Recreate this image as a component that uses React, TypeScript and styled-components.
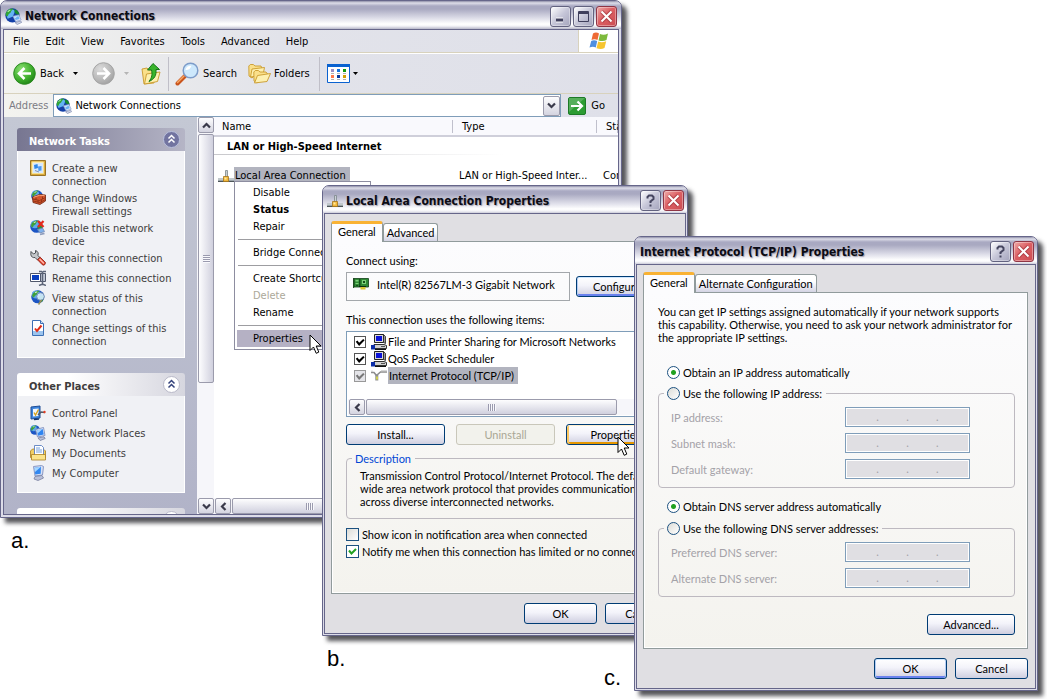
import React, { useId } from "react";
import styled, { createGlobalStyle, css } from "styled-components";

/* ---------- palette and shared values ---------- */

const c = {
  frame: "#66668a",
  face: "#e0dfe3",
  line: "#919b9c",
  field: "#7f9db9",
  navy: "#003c74",
  beige: "#d8d2bd",
  task: "#3f3d3d",
  select: "#b2b4bf",
};

const shellFont = `"DejaVu Sans Condensed", "DejaVu Sans", sans-serif`;
const dialogFont = `Lato, "Liberation Sans", sans-serif`;

const GlobalStyle = createGlobalStyle`
  * { box-sizing: border-box; }
  body { margin: 0; background: #fff; color: #000; }
  button, input { font: inherit; color: inherit; margin: 0; padding: 0; }
  figure { margin: 0; }
  svg { display: block; flex: none; }
`;

/* ---------- desktop ---------- */

const Desktop = styled.main`
  display: grid;
  grid-template-columns: 322fr 282fr 18fr 12fr 54fr 350fr 9fr;
  overflow: hidden;
  padding-bottom: 8px;
`;

const Panel = styled.figure<{ $from: number; $to: number; $top: number }>`
  grid-row: 1;
  grid-column: ${(p) => p.$from} / ${(p) => p.$to};
  align-self: start;
  margin-top: ${(p) => p.$top}px;
  min-width: 0;
  position: relative;
`;

const SidePanel = styled(Panel)`
  display: grid;
  grid-template-columns: 30px minmax(0, 1fr);
  align-items: end;
`;

const Caption = styled.figcaption<{ $indent?: number }>`
  font: 22px/26px "Liberation Sans", Arial, sans-serif;
  padding: 10px 0 0 ${(p) => p.$indent ?? 0}px;
`;

/* ---------- window frame ---------- */

const Frame = styled.section<{ $edge: number }>`
  border: 1px solid ${c.frame};
  border-radius: 7px 7px 0 0;
  background: #dcdce8;
  padding: 0 ${(p) => p.$edge}px ${(p) => p.$edge}px;
  box-shadow: 5px 5px 4px rgba(30, 30, 35, 0.75);
`;

const TitleBar = styled.header<{ $edge: number }>`
  display: flex;
  align-items: center;
  gap: 2px;
  height: ${(p) => 26 + p.$edge}px;
  margin: 0 -${(p) => p.$edge}px;
  padding: 2px ${(p) => 2 + p.$edge}px 0 4px;
  border-radius: 6px 6px 0 0;
  background: linear-gradient(#8e8ea8 0, #dedee9 2px, #a9a9c2 5px, #a9a9c1 8px, #e2e2ec 18px, #fff 23px, #f4f4f8 25px, #b6b6c8 28px);
`;

const Title = styled.h1`
  flex: 1;
  min-width: 0;
  margin: 0;
  padding-left: 1px;
  overflow: hidden;
  white-space: nowrap;
  font: bold 12px/20px ${shellFont};
  color: #0b0b14;
  text-shadow: 1px 1px 1px rgba(110, 110, 130, 0.6);
`;

const CaptionButton = styled.button<{ $close?: boolean }>`
  width: 21px;
  height: 21px;
  display: grid;
  place-items: center;
  border: 1px solid ${(p) => (p.$close ? "#8f3545" : "#62627f")};
  border-radius: 3px;
  box-shadow: inset 0 0 0 1px rgba(255, 255, 255, 0.35);
  background: ${(p) =>
    p.$close
      ? "linear-gradient(135deg, #efaaa8, #dc6064 45%, #cc4c52)"
      : "linear-gradient(135deg, #fff, #c6c6d8 50%, #a4a4bc)"};
`;

const Client = styled.div<{ $face?: boolean }>`
  border: 1px solid ${c.frame};
  ${(p) => p.$face && css`
    background: ${c.face};
    padding: 7px 7px 9px 6px;
  `}
`;

const CloseMark = () => (
  <svg width="13" height="13" viewBox="0 0 13 13">
    <path d="M1.500 1.500l10 10M11.500 1.500l-10 10" stroke="#8b2530" strokeOpacity=".5" strokeWidth="4" />
    <path d="M1.500 1.500l10 10M11.500 1.500l-10 10" stroke="#fff" strokeWidth="2" />
  </svg>
);

const HelpMark = () => (
  <svg width="13" height="13" viewBox="0 0 13 13" fill="none">
    <path d="M3.500 4.500V3L5 1.500h3L9.500 3v2L6.500 7.500V9" stroke="#45455f" strokeWidth="2" />
    <path d="M5.500 10.500h2v2h-2z" fill="#45455f" />
  </svg>
);

/* ---------- icons ---------- */

const Globe = ({ x = 0, y = 0, r = 6 }: { x?: number; y?: number; r?: number }) => (
  <g transform={`translate(${x} ${y}) scale(${r / 6})`}>
    <circle cx="6" cy="6" r="5.800" fill="#1c55c4" />
    <circle cx="4.500" cy="4" r="3.600" fill="#5fa8ee" />
    <path d="M1 4.500C2 1.500 5 .3 7.500.6 7 2 5.500 2 5.500 3.500 4.500 5 3 4.500 3 6.500 2 7 1 6 1 4.500z" fill="#3fa03a" />
    <path d="M7 5.500c2-1.500 3.500-1 4.600 0 0 2.500-1.200 4.500-3 5.500C8 9.500 6.500 8 7 5.500z" fill="#2c9234" />
    <path d="M3.500 2.500l2-1" stroke="#cdebc8" />
  </g>
);

const NetworkIcon = ({ size = 16 }: { size?: number }) => (
  <svg width={size} height={size} viewBox="0 0 16 16">
    <circle cx="7" cy="7" r="6.700" fill="#1440a8" />
    <path d="M2.500 10C.5 6 2 2 6.500 1l3 1.500L7.500 8z" fill="#62b4f4" />
    <path d="M.6 5.500C1.500 2 4.500.3 8 .5 7.500 2 5.500 2.200 5.500 4 4 5.800 3.200 5.300 2.700 7.500 1.500 8.500.5 7.500.6 5.500z" fill="#2fa536" />
    <path d="M9 1.200c2.500.6 4.200 2.600 4.600 5L11 6.200C9.200 5 8.300 3 9 1.200z" fill="#178a30" />
    <path d="M2.500 3.500L5 1.800" stroke="#b6efac" />
    <path d="M7.500 7.800l5.500-1.300 2.200 4.700-5.200 1.600z" fill="#dfeafc" stroke="#8ba0cf" strokeWidth=".7" />
    <path d="M8.500 8.300l4-.9 1.300 2.900-3.700 1.100z" fill="#6fb2f5" />
    <path d="M8.500 8.300l4-.9-3.200 2.400z" fill="#c4e7ff" />
    <path d="M9.500 13.800l5.200-1.500 1.100 1.200-4.300 2z" fill="#d3d9ea" stroke="#7f8aae" strokeWidth=".7" />
  </svg>
);

const ConnectionIcon = () => (
  <svg width="16" height="16" viewBox="0 0 16 16">
    <path d="M7.500 2.500h2v7h-2z" fill="#c9d0d4" stroke="#7b858a" strokeWidth=".8" />
    <path d="M0 10h16v3.500H0z" fill="#9da6ab" />
    <path d="M0 11h16" stroke="#e6ebee" />
    <path d="M0 13.500h16" stroke="#4d5659" />
    <path d="M5.500 8.500h5v5h-5z" fill="#f3b93c" stroke="#a7761a" strokeWidth=".8" />
    <path d="M6.500 9.500h2v2h-2z" fill="#ffeaa0" />
  </svg>
);

const WizardIcon = () => (
  <svg width="16" height="16" viewBox="0 0 16 16">
    <path d="M.5.5h15v15H.5z" fill="#d9a93a" stroke="#9a7426" />
    <path d="M2 2h11.500v11.500H2z" fill="#fff6d0" stroke="#f6dd8e" />
    <path d="M3 3h10v10H3z" fill="#d8e8fb" />
    <path d="M4 5l3.500-1 .5 4-3.500 1z" fill="#2f86e8" />
    <path d="M8 6.500l3.500-.5v4.500l-3 .5z" fill="#4b98f0" />
    <path d="M5 10.500l4 1.500" stroke="#8593b4" />
  </svg>
);

const FirewallIcon = () => (
  <svg width="16" height="16" viewBox="0 0 16 16">
    <Globe x={1} y={0} r={6} />
    <path d="M2.500 7l7-2.500 6 .5v6l-5.500 3.500-7-2z" fill="#d1552c" stroke="#6f2410" strokeWidth=".8" />
    <path d="M2.500 9l7 1.500 6-3M3 11l7 1.500 5.500-3M6 7.500v2.300M8 10.500v2M12.500 6.500v2.500M11.500 10v2.500" stroke="#8c2c10" strokeWidth=".8" fill="none" />
    <path d="M3.500 7.300l6-2 5 .3" stroke="#f7a078" fill="none" />
  </svg>
);

const DisableIcon = () => (
  <svg width="16" height="16" viewBox="0 0 16 16">
    <Globe r={6.500} />
    <path d="M8 1l5.500 6M13.500 1L8 7" stroke="#e52a1d" strokeWidth="2.200" />
    <path d="M7.500 9.500l5-1.500 2 3.500-4.500 1.500z" fill="#7fb2ee" stroke="#7088b4" strokeWidth=".8" />
    <path d="M10 14.500l4.500-1.200" stroke="#8f9dbd" strokeWidth="1.800" />
  </svg>
);

const WrenchIcon = () => (
  <svg width="16" height="16" viewBox="0 0 16 16">
    <path d="M.8 4.500L1 1.500l2.500 2.500L5.500 3V.5C8 1.200 8.800 3.500 7.800 5.500l2.200 2-2.500 2.500L5 7.500C3 8 1.200 7 .8 4.500z" fill="#c3c7ca" stroke="#3f4548" strokeWidth=".9" />
    <path d="M7.500 9.800l2.700-2.600 5 5c.8 1.800-1.200 3.800-2.800 2.600z" fill="#e3412d" stroke="#85190e" strokeWidth=".8" />
    <path d="M9.500 9l4.500 4.500" stroke="#ffc1b3" strokeWidth="1.200" />
  </svg>
);

const RenameIcon = () => (
  <svg width="16" height="16" viewBox="0 0 16 16">
    <path d="M.5 3.500h10v8H.5z" fill="#fff" stroke="#50576b" />
    <path d="M2 5h7v5H2z" fill="#0a3fc0" />
    <path d="M10.500 3.500h5v8h-5z" fill="#c2c8d6" stroke="#50576b" />
    <path d="M9 1.500h2.500l1 1 1-1H16M12.500 2v12M9 15.500l2.500-1h2l2.500 1" stroke="#5c6478" strokeWidth="1.500" fill="none" />
  </svg>
);

const StatusIcon = () => (
  <svg width="16" height="16" viewBox="0 0 16 16">
    <Globe x={1} r={6.800} />
    <circle cx="10.500" cy="6.500" r="3.800" fill="#d4edff" fillOpacity=".92" stroke="#7690b4" />
    <path d="M11.500 10l-3 4.500" stroke="#9a8f5a" strokeWidth="1.500" />
  </svg>
);

const SettingsIcon = () => (
  <svg width="16" height="16" viewBox="0 0 16 16">
    <path d="M2.500.5h8l3 3v12h-11z" fill="#fff" stroke="#3c6fb4" />
    <path d="M3 11h10v4H3z" fill="#9cc4ee" />
    <path d="M10.500.5v3h3" fill="#cfe0f5" stroke="#3c6fb4" />
    <path d="M5 8.500l2 2.500 4.500-5.500" stroke="#e02b14" strokeWidth="2" fill="none" />
  </svg>
);

const ControlPanelIcon = () => (
  <svg width="16" height="16" viewBox="0 0 16 16">
    <path d="M1 2l9-1v12l-9 1z" fill="#3c84dc" stroke="#1f4d96" />
    <path d="M3 4l5.500-.5v7.500L3 11.500z" fill="#eff6ff" />
    <path d="M4 7.500L5.500 10l3-5.500" stroke="#d8a21c" strokeWidth="1.400" fill="none" />
    <path d="M8 10l3-3 4 .5" stroke="#505a66" strokeWidth="1.500" fill="none" />
    <circle cx="14.500" cy="7" r="1.200" fill="#e33b22" />
    <path d="M4 14.500l5-.5" stroke="#16366e" strokeWidth="1.500" />
  </svg>
);

const PlacesIcon = () => (
  <svg width="16" height="16" viewBox="0 0 16 16">
    <Globe r={5} />
    <path d="M5.500 4.500l8-2 1.500 8-7.500 1.500z" fill="#dbe6fb" stroke="#7f8fbd" strokeWidth=".9" />
    <path d="M6.700 5.400l6-1.500 1 5.600-5.600 1.200z" fill="#2f84f0" />
    <path d="M6.700 5.400l6-1.500-5.200 4.500z" fill="#a6d6ff" />
    <path d="M8 13l6-1.200 1.200 1.700-5 2z" fill="#b9c0d9" stroke="#7980a0" strokeWidth=".8" />
  </svg>
);

const DocumentsIcon = () => (
  <svg width="16" height="16" viewBox="0 0 16 16">
    <path d="M.5 6l2-2h2v10H2L.5 12.500z" fill="#f1cf63" stroke="#a97f1f" strokeWidth=".8" />
    <path d="M15.500 6l-1.500-1.500h-2V13h3.500z" fill="#f1cf63" stroke="#a97f1f" strokeWidth=".8" />
    <path d="M4.500.5h7l2 2V12h-9z" fill="#fff" stroke="#5b7fc0" strokeWidth=".9" />
    <path d="M6 3h4M6 5h6M6 7h6" stroke="#74a0dc" />
    <path d="M1.500 9.500h14v5.500H1.500z" fill="#fbe48b" stroke="#a97f1f" strokeWidth=".8" />
  </svg>
);

const ComputerIcon = () => (
  <svg width="16" height="16" viewBox="0 0 16 16">
    <path d="M3.500 1.500l8-1 2 1-1 8.500-7.500 1z" fill="#d6e0f6" stroke="#7f8fbd" strokeWidth=".9" />
    <path d="M4.500 2.700l6.500-.9-.3 7-5.500.7z" fill="#3388f0" />
    <path d="M4.500 2.700l6.500-.9-6 5.200z" fill="#a6d6ff" />
    <path d="M5 11.500l7-1 1.500 2.500-5.500 2.500-4-1.500z" fill="#b9c0d9" stroke="#7980a0" strokeWidth=".8" />
  </svg>
);

const BackIcon = ({ off }: { off?: boolean }) => (
  <svg width="23" height="23" viewBox="0 0 23 23">
    <defs>
      <radialGradient id={off ? "fwd" : "bck"} cx=".35" cy=".3" r=".8">
        <stop offset="0" stopColor={off ? "#dcdcdc" : "#8be072"} />
        <stop offset=".6" stopColor={off ? "#b9b9b9" : "#3fae2c"} />
        <stop offset="1" stopColor={off ? "#9d9d9d" : "#1b7d13"} />
      </radialGradient>
    </defs>
    <circle cx="11.500" cy="11.500" r="10.800" fill={`url(#${off ? "fwd" : "bck"})`} stroke={off ? "#a5a5a5" : "#2b8a20"} />
    <path
      d={off ? "M5 11.500h12M11.500 6l5.500 5.500-5.500 5.500" : "M18 11.500H6M11.500 6L6 11.500l5.500 5.500"}
      stroke="#fff"
      strokeWidth="2.600"
      fill="none"
    />
  </svg>
);

const Caret = ({ color = "#000" }: { color?: string }) => (
  <svg width="5" height="3" viewBox="0 0 5 3">
    <path d="M0 0h5L2.500 3z" fill={color} />
  </svg>
);

const folderFill = { fill: "#fae08a", stroke: "#c99a2c", strokeWidth: 0.9 };

const UpIcon = () => (
  <svg width="20" height="22" viewBox="0 0 20 22">
    <path d="M1 6l5-1 2 2 5-1v14l-10 1z" {...folderFill} />
    <path d="M3.500 21L5.500 11l13.500-2-2.500 9.500z" fill="#fdf0b0" stroke="#c99a2c" strokeWidth=".9" />
    <path d="M12 .5l6.500 6h-3.500c.5 6-1.500 9.500-7 12 3-4 3.500-7 2.500-11.500H6.500z" fill="#39b42c" stroke="#16761a" />
  </svg>
);

const SearchIcon = () => (
  <svg width="24" height="24" viewBox="0 0 24 24">
    <path d="M2.500 21.500L10 14" stroke="#c9541c" strokeWidth="4" strokeLinecap="round" />
    <path d="M2.500 20.500L9 14" stroke="#f6a765" strokeWidth="1.500" strokeLinecap="round" />
    <circle cx="15.500" cy="8.500" r="7.300" fill="#cde8fc" stroke="#7d9cc9" strokeWidth="1.500" />
    <path d="M10.500 8c.5-3 3-4.500 6-4.200-1 3-3 4.500-6 4.200z" fill="#fff" />
  </svg>
);

const FoldersIcon = () => (
  <svg width="23" height="21" viewBox="0 0 23 21">
    <path d="M1 13L.8 3l1.500-1.500h3L7 3h6l1 2.500L4 15z" {...folderFill} />
    <path d="M2.500 14L4 6l12.500-1.500L15 12z" fill="#fdf0b0" stroke="#c99a2c" strokeWidth=".9" />
    <path d="M6 18L5.800 9l1.500-1.500h3L12 9h6l1.500 2L9 20z" {...folderFill} />
    <path d="M6.500 20L9.500 12.500l13-2L19 18.500z" fill="#fdf0b0" stroke="#c99a2c" strokeWidth=".9" />
  </svg>
);

const ViewsIcon = () => (
  <svg width="23" height="19" viewBox="0 0 23 19">
    <path d="M.5.5h22v18H.5z" fill="#fff" stroke="#0a62d0" />
    <path d="M0 0h23v3H0z" fill="#0a62d0" />
    <path d="M4 5h3v3H4z" fill="#9a8fc4" />
    <path d="M10 5h3v3h-3z" fill="#1273e0" />
    <path d="M16 5h3v3h-3z" fill="#109a10" />
    <path d="M4 11h3v3H4z" fill="#ff7a4a" />
    <path d="M10 11h3v3h-3z" fill="#0a3a9c" />
    <path d="M16 11h3v3h-3z" fill="#d2a005" />
    <path d="M4 9.500h3M10 9.500h3M16 9.500h3M4 15.500h3M10 15.500h3M16 15.500h3" stroke="#b0b0b0" />
  </svg>
);

const FlagIcon = () => (
  <svg width="20" height="18" viewBox="0 0 20 18">
    <path d="M4 1.500C6 .3 8 .3 10 1.500L8.500 8c-2-1-4-1-6 0z" fill="#ee6a35" />
    <path d="M11 2c2.500 1 5 1 8-.5L17.500 8c-2.500 1.500-5 1.300-8 .5z" fill="#7dba3c" />
    <path d="M2.200 9C4 8 6 8 8.200 9L6.800 15.500c-2-1-4-1-6.300 0z" fill="#4f8fe0" />
    <path d="M9.200 9.500c2.500 1 5 1 8-.3L15.500 16c-2.500 1.300-5 1.200-8 .2z" fill="#f7c52f" />
  </svg>
);

const GoIcon = () => (
  <svg width="18" height="18" viewBox="0 0 18 18">
    <rect x=".5" y=".5" width="17" height="17" rx="1.500" fill="#2c9c32" stroke="#1d7a26" />
    <path d="M1 1h16L1 15z" fill="#fff" fillOpacity=".2" />
    <path d="M3 9h11M9.500 4.500L14 9l-4.500 4.500" stroke="#fff" strokeWidth="2.200" fill="none" />
  </svg>
);

const Chevron = ({ turn = 0 }: { turn?: number }) => (
  <svg width="9" height="9" viewBox="0 0 9 9">
    <path d="M1 2.500L4.500 6 8 2.500" transform={`rotate(${turn} 4.500 4.500)`} stroke="#3a3a4a" strokeWidth="2.200" fill="none" />
  </svg>
);

const CollapseMark = ({ color }: { color: string }) => (
  <svg width="9" height="10" viewBox="0 0 9 10">
    <path d="M1.500 4.500l3-3 3 3M1.500 8.500l3-3 3 3" stroke={color} strokeWidth="1.500" fill="none" />
  </svg>
);

const CardIcon = () => (
  <svg width="16" height="12" viewBox="0 0 16 12">
    <path d="M1 .5h14.500v8.500H1z" fill="#2f8a35" stroke="#123f16" strokeWidth=".8" />
    <path d="M.6 0v10" stroke="#123f16" />
    <path d="M2.500 2h3v1.500h-3zM2.500 5h3v1h-3zM9 2h4v4H9z" fill="#7fd07a" />
    <path d="M6 1h1.500v7H6zM10 3h2v2h-2zM3 7h2v1H3z" fill="#14501a" />
    <path d="M7.500 9h5v2.500h-5z" fill="#d9c532" />
    <path d="M6 8.500h7" stroke="#0c2e10" />
  </svg>
);

const ServiceIcon = () => (
  <svg width="16" height="16" viewBox="0 0 16 16">
    <path d="M3.500.5h9v8h-9z" fill="#d8d8d8" stroke="#222" />
    <path d="M5 2h6v5H5z" fill="#0b12d8" />
    <path d="M12.500.5l2 2v7l-2-1z" fill="#9a9a9a" stroke="#222" strokeWidth=".8" />
    <path d="M3 10.500h10l2.500 1v3H3z" fill="#cfcfcf" stroke="#333" />
    <path d="M10 12.500h4" stroke="#555" />
    <path d="M0 11h4v4.500H0z" fill="#0b2ca8" />
    <path d="M4 15.500h11" stroke="#111" />
  </svg>
);

const ProtocolIcon = () => (
  <svg width="16" height="16" viewBox="0 0 16 16">
    <path d="M0 4.500h3l2.500 3M16 4H9.500L6 7" stroke="#8d8d8d" strokeWidth="1.600" fill="none" />
    <path d="M0 3.200h2M10 2.700h6" stroke="#cdcdcd" />
    <path d="M4.300 6.500h3v6h-3z" fill="#8e8e8e" />
    <path d="M5 8.500h2v3H5z" fill="#cfcf4e" />
  </svg>
);

const Pointer = styled.svg.attrs({ width: 13, height: 21, viewBox: "0 0 13 21", children: (
  <path d="M1 1v15.500l3.500-3.500 2.700 6.300 2.600-1.200L7.200 12H12z" fill="#fff" stroke="#000" />
) })<{ $left: number; $top: number }>`
  position: absolute;
  left: ${(p) => p.$left}px;
  top: ${(p) => p.$top}px;
`;

/* ---------- explorer window ---------- */

const Shell = styled.div`
  font: 11px/13px ${shellFont};
  white-space: nowrap;
`;

const barFill = css`
  background: linear-gradient(90deg, #f3f3ef, #e2e3ea 45%, #dfe0e9);
`;

const MenuBar = styled.nav`
  ${barFill}
  display: flex;
  height: 23px;
  border-bottom: 1px solid ${c.beige};
  padding-left: 1px;
`;

const MenuButton = styled.button`
  border: 0;
  background: none;
  padding: 0 8px;
`;

const FlagBox = styled.div`
  margin-left: auto;
  width: 40px;
  display: grid;
  place-items: center;
  background: #fff;
  border-left: 1px solid ${c.beige};
`;

const ToolBar = styled.div`
  ${barFill}
  display: flex;
  align-items: center;
  height: 41px;
  border-top: 1px solid #fff;
  border-bottom: 1px solid ${c.beige};
  padding-left: 9px;
`;

const ToolButton = styled.button<{ $gap?: number; $after: number }>`
  display: flex;
  align-items: center;
  gap: ${(p) => p.$gap ?? 4}px;
  border: 0;
  background: none;
  margin-right: ${(p) => p.$after}px;
`;

const ToolDivider = styled.i<{ $after: number }>`
  width: 1px;
  height: 34px;
  background: #c0bfc8;
  margin-right: ${(p) => p.$after}px;
`;

const AddressBar = styled.form`
  ${barFill}
  display: flex;
  align-items: center;
  height: 23px;
  color: #7c7c84;
  padding-left: 5px;
`;

const AddressBox = styled.div`
  flex: 1;
  display: flex;
  align-items: center;
  gap: 3px;
  height: 23px;
  margin: 0 7px 0 5px;
  padding: 0 0 0 2px;
  border: 1px solid ${c.field};
  background: #fff;
  color: #000;
`;

const AddressInput = styled.input`
  flex: 1;
  min-width: 0;
  border: 0;
  outline: 0;
  background: none;
`;

const GoButton = styled.button`
  display: flex;
  align-items: center;
  gap: 5px;
  border: 0;
  background: none;
  color: #000;
  margin-right: 13px;
`;

const BarButton = styled.button<{ $drop?: boolean }>`
  flex: none;
  width: ${(p) => (p.$drop ? 17 : 16)}px;
  height: ${(p) => (p.$drop ? 20 : 16)}px;
  display: grid;
  place-items: center;
  border: 1px solid #9b9bac;
  border-radius: 2px;
  background: linear-gradient(#fdfdfe, #d4d4e0);
`;

const Explorer = styled.div`
  display: grid;
  grid-template-columns: 193px 17px minmax(0, 1fr);
  height: 397px;
  background: #fff;
`;

const TaskPane = styled.aside`
  display: flex;
  flex-direction: column;
  gap: 15px;
  overflow: hidden;
  white-space: normal;
  padding: 11px 12px 0 13px;
  background: linear-gradient(#c4c8d4, #b1b3c8);
`;

const TaskGroup = styled.section`
  flex: none;
`;

const TaskHead = styled.h2<{ $strong?: boolean }>`
  display: flex;
  align-items: center;
  justify-content: space-between;
  height: 23px;
  margin: 0;
  padding: 3px 5px 0 12px;
  border-radius: 3px 3px 0 0;
  font: bold 11px/13px ${shellFont};
  color: ${(p) => (p.$strong ? "#fff" : c.task)};
  background: ${(p) =>
    p.$strong ? "linear-gradient(90deg, #777691, #b5b5c6)" : "linear-gradient(90deg, #fff 30%, #d6d6df)"};
`;

const Collapse = styled.button<{ $strong?: boolean }>`
  width: 17px;
  height: 17px;
  margin-top: -4px;
  display: grid;
  place-items: center;
  border: 1px solid ${(p) => (p.$strong ? "#b9c0dc" : "#b8b8c8")};
  border-radius: 50%;
  background: ${(p) => (p.$strong ? "#7274a0" : "#fff")};
`;

const TaskList = styled.ul`
  display: grid;
  gap: 4px;
  margin: 0;
  padding: 9px 11px 11px 12px;
  list-style: none;
  border: 1px solid #fff;
  border-top: 0;
  background: #f0f1f5;
`;

const TaskLink = styled.a`
  display: flex;
  gap: 6px;
  min-height: 16px;
  color: ${c.task};
  text-decoration: none;
  span { padding-top: 2px; margin-bottom: -2px; }
`;

const VScroll = styled.div`
  display: flex;
  flex-direction: column;
  align-items: flex-end;
  background: #f6f6fa;
`;

const Thumb = styled.div<{ $length?: number; $column?: boolean }>`
  display: grid;
  place-items: center;
  border: 1px solid #9b9bac;
  border-radius: 2px;
  ${(p) =>
    p.$column
      ? css`width: 16px; height: ${p.$length}px; margin: 1px 0 auto; background: linear-gradient(90deg, #fdfdfe, #d0d0de);`
      : css`height: 16px; margin: 0 1px; width: ${p.$length}px; flex: 0 1 auto; background: linear-gradient(#fdfdfe, #d0d0de);`}
`;

const Grip = styled.i<{ $column?: boolean }>`
  width: ${(p) => (p.$column ? 7 : 8)}px;
  height: ${(p) => (p.$column ? 8 : 7)}px;
  background: repeating-linear-gradient(${(p) => (p.$column ? "180deg" : "90deg")}, #9a9aae 0 1px, #f8f8fc 1px 2px);
`;

const HScroll = styled.div`
  display: flex;
  padding-left: 1px;
  background: #f6f6fa;
`;

const ListPane = styled.div`
  position: relative;
  display: flex;
  flex-direction: column;
  justify-content: space-between;
  overflow: hidden;
`;

const Connections = styled.table`
  width: 100%;
  table-layout: fixed;
  border-collapse: separate;
  border-spacing: 0;
  th, td { text-align: left; vertical-align: top; font-weight: normal; padding: 0; overflow: hidden; }
  thead th {
    height: 20px;
    padding: 3px 0 0 9px;
    background: linear-gradient(90deg, #c0c0cc, #c0c0cc) right 3px / 1px 13px no-repeat #f9f9fd;
    border-bottom: 2px solid #cfcfda;
  }
  thead th:first-child { padding-left: 8px; }
`;

const GroupCell = styled.th`
  && {
    height: 18px;
    padding: 3px 0 0 13px;
    font-weight: bold;
    background: linear-gradient(90deg, #c8c8cc, #fff 290px) 0 100% / 100% 1px no-repeat;
  }
`;

const NameCell = styled.td`
  && { padding: 12px 0 0 4px; }
`;

const FlatCell = styled.td`
  && { padding: 14px 0 0 6px; }
`;

const Named = styled.div`
  display: flex;
  align-items: center;
`;

const Selected = styled.span<{ $pad: number }>`
  padding: 1px ${(p) => p.$pad}px 1px 1px;
  line-height: 15px;
  background: ${c.select};
`;

const ContextMenu = styled.ul`
  position: absolute;
  left: 20px;
  top: 64px;
  width: 137px;
  margin: 0;
  padding: 2px;
  list-style: none;
  border: 1px solid #8d8da0;
  background: #fff;
`;

const MenuItem = styled.button<{ $bold?: boolean; $lit?: boolean }>`
  display: block;
  width: 100%;
  height: 17px;
  padding-left: 16px;
  text-align: left;
  border: 0;
  background: ${(p) => (p.$lit ? "#b5b1c4" : "none")};
  font-weight: ${(p) => (p.$bold ? "bold" : "normal")};
  &:disabled { color: #aca899; }
`;

const MenuRule = styled.li`
  height: 1px;
  margin: 4px 1px;
  background: #9d9da1;
`;

const menus = ["File", "Edit", "View", "Favorites", "Tools", "Advanced", "Help"];

const tasks: [React.FC, string][] = [
  [WizardIcon, "Create a new connection"],
  [FirewallIcon, "Change Windows Firewall settings"],
  [DisableIcon, "Disable this network device"],
  [WrenchIcon, "Repair this connection"],
  [RenameIcon, "Rename this connection"],
  [StatusIcon, "View status of this connection"],
  [SettingsIcon, "Change settings of this connection"],
];

const places: [React.FC, string][] = [
  [ControlPanelIcon, "Control Panel"],
  [PlacesIcon, "My Network Places"],
  [DocumentsIcon, "My Documents"],
  [ComputerIcon, "My Computer"],
];

const contextItems = ["Disable", "Status", "Repair", "-", "Bridge Connections", "-", "Create Shortcut", "Delete", "Rename", "-", "Properties"];

const TaskSection = ({ title, strong, items }: { title?: string; strong?: boolean; items: [React.FC, string][] }) => (
  <TaskGroup>
    <TaskHead $strong={strong}>
      <span>{title}</span>
      <Collapse $strong={strong} aria-label="Collapse section">
        <CollapseMark color={strong ? "#fff" : "#34427c"} />
      </Collapse>
    </TaskHead>
    <TaskList>
      {items.map(([Icon, text]) => (
        <li key={text}>
          <TaskLink href="#"><Icon /><span>{text}</span></TaskLink>
        </li>
      ))}
    </TaskList>
  </TaskGroup>
);

const ExplorerWindow = () => (
  <Frame $edge={2}>
    <TitleBar $edge={2}>
      <NetworkIcon size={17} />
      <Title>Network Connections</Title>
      <CaptionButton aria-label="Minimize">
        <svg width="13" height="13"><path d="M2 10h7" stroke="#fff" strokeWidth="5" /><path d="M2 10h7" stroke="#3f3f5c" strokeWidth="3" /></svg>
      </CaptionButton>
      <CaptionButton aria-label="Maximize">
        <svg width="13" height="13" fill="none"><path d="M1.500 1.500h10v10h-10zM1 2.500h11M1 3.500h11" stroke="#3f3f5c" /></svg>
      </CaptionButton>
      <CaptionButton $close aria-label="Close"><CloseMark /></CaptionButton>
    </TitleBar>
    <Client>
      <Shell>
        <MenuBar>
          {menus.map((m) => <MenuButton key={m}>{m}</MenuButton>)}
          <FlagBox><FlagIcon /></FlagBox>
        </MenuBar>
        <ToolBar>
          <ToolButton $after={9}><BackIcon />Back</ToolButton>
          <ToolButton $after={14} aria-label="Back history"><Caret /></ToolButton>
          <ToolButton $after={9} aria-label="Forward"><BackIcon off /></ToolButton>
          <ToolButton $after={12} aria-label="Forward history"><Caret color="#b5b5b5" /></ToolButton>
          <ToolButton $after={7} aria-label="Up"><UpIcon /></ToolButton>
          <ToolDivider $after={6} />
          <ToolButton $after={11}><SearchIcon />Search</ToolButton>
          <ToolButton $after={9} $gap={3}><FoldersIcon />Folders</ToolButton>
          <ToolDivider $after={7} />
          <ToolButton $after={0} $gap={3} aria-label="Views"><ViewsIcon /><Caret /></ToolButton>
        </ToolBar>
        <AddressBar onSubmit={(e) => e.preventDefault()}>
          <label htmlFor="address">Address</label>
          <AddressBox>
            <NetworkIcon />
            <AddressInput id="address" defaultValue="Network Connections" />
            <BarButton type="button" $drop aria-label="Show addresses"><Chevron /></BarButton>
          </AddressBox>
          <GoButton><GoIcon />Go</GoButton>
        </AddressBar>
        <Explorer>
          <TaskPane>
            <TaskSection title="Network Tasks" strong items={tasks} />
            <TaskSection title="Other Places" items={places} />
            <TaskSection items={[]} />
          </TaskPane>
          <VScroll>
            <BarButton aria-label="Scroll up"><Chevron turn={180} /></BarButton>
            <Thumb $column $length={249}><Grip $column /></Thumb>
            <BarButton aria-label="Scroll down"><Chevron /></BarButton>
          </VScroll>
          <ListPane>
            <Connections>
              <colgroup><col width="239" /><col width="144" /><col /></colgroup>
              <thead><tr><th>Name</th><th>Type</th><th>Status</th></tr></thead>
              <tbody>
                <tr><GroupCell colSpan={3} scope="rowgroup">LAN or High-Speed Internet</GroupCell></tr>
                <tr>
                  <NameCell><Named><ConnectionIcon /><Selected $pad={4}>Local Area Connection</Selected></Named></NameCell>
                  <FlatCell>LAN or High-Speed Inter...</FlatCell>
                  <FlatCell>Connected</FlatCell>
                </tr>
              </tbody>
            </Connections>
            <HScroll>
              <BarButton aria-label="Scroll left"><Chevron turn={90} /></BarButton>
              <Thumb $length={156}><Grip /></Thumb>
            </HScroll>
            <ContextMenu>
              {contextItems.map((t, i) =>
                t === "-" ? <MenuRule key={i} /> : (
                  <li key={t}>
                    <MenuItem $bold={t === "Status"} $lit={t === "Properties"} disabled={t === "Delete"}>{t}</MenuItem>
                  </li>
                ),
              )}
            </ContextMenu>
            <Pointer $left={95} $top={217} />
          </ListPane>
        </Explorer>
      </Shell>
    </Client>
  </Frame>
);

/* ---------- dialog parts ---------- */

const Dialog = styled.div`
  font: 11px/13px ${dialogFont};
`;

const Tabs = styled.div`
  display: flex;
  align-items: flex-end;
  height: 20px;
`;

const Tab = styled.button<{ $on?: boolean }>`
  height: 18px;
  padding: 0 3px;
  border: 1px solid ${c.line};
  border-bottom: 0;
  border-radius: 3px 3px 0 0;
  background: linear-gradient(#fff, #fff 40%, #d4d4e4);
  ${(p) => p.$on && css`
    position: relative;
    height: 21px;
    margin-bottom: -1px;
    padding: 0 6px 4px;
    border-top: 3px solid #f9b233;
    background: #fcfcfe;
  `}
`;

const Sheet = styled.div<{ $height: number }>`
  display: flex;
  flex-direction: column;
  min-height: ${(p) => p.$height}px;
  padding: 12px 12px 13px 14px;
  border: 1px solid ${c.line};
  box-shadow: inset -1px -1px #fff, inset 1px 0 #fff;
  background: linear-gradient(#fcfcfe, #f4f3ee);
`;

const Push = styled.button<{ $w: number; $tone?: "default" | "hot" }>`
  flex: 0 0 auto;
  width: ${(p) => p.$w}px;
  height: 21px;
  border: 1px solid ${c.navy};
  border-radius: 3px;
  background: linear-gradient(#fff, #f3f3fa 45%, #cfcfe0);
  ${(p) => p.$tone === "default" && css`box-shadow: inset 0 1px #cee7ff, inset 1px 0 #b4cdf4, inset -1px 0 #b4cdf4, inset 0 -2px #6982ee;`}
  ${(p) => p.$tone === "hot" && css`box-shadow: inset 0 1px #fff0cf, inset 2px 0 #fbc761, inset -2px 0 #fbc761, inset 0 -2px #e59700;`}
  &:disabled { border-color: #c9c7ba; background: #f2f2ec; color: #a9a794; }
`;

const Footer = styled.footer<{ $top?: number }>`
  display: flex;
  justify-content: flex-end;
  gap: 8px;
  margin-top: ${(p) => p.$top ?? 9}px;
`;

const Line = styled.div<{ $top?: number; $gap?: number }>`
  display: flex;
  align-items: center;
  gap: ${(p) => p.$gap ?? 0}px;
  margin-top: ${(p) => p.$top ?? 0}px;
  white-space: nowrap;
`;

const Text = styled.p<{ $top?: number }>`
  margin: ${(p) => p.$top ?? 0}px 0 0;
`;

const Adapter = styled.div`
  flex: 1;
  display: flex;
  gap: 8px;
  height: 29px;
  padding: 5px 6px;
  border: 1px solid #a3a7ab;
`;

const ItemBox = styled.div`
  display: flex;
  flex-direction: column;
  justify-content: space-between;
  height: 86px;
  margin-top: 5px;
  padding: 1px;
  border: 1px solid ${c.field};
  background: #fff;
  overflow: hidden;
`;

const ItemRow = styled.label`
  display: flex;
  align-items: center;
  height: 17px;
  padding-left: 6px;
  white-space: nowrap;
  svg { margin: 0 1px 0 5px; }
`;

const tickMark = (color: string) =>
  `url("data:image/svg+xml,%3Csvg xmlns='http://www.w3.org/2000/svg' width='11' height='11'%3E%3Cpath d='M2 4.500l2.500 3L9 3' stroke='%23${color}' stroke-width='2' fill='none'/%3E%3C/svg%3E")`;

const Check = styled.input.attrs({ type: "checkbox" })<{ $flat?: boolean }>`
  appearance: none;
  flex: none;
  width: ${(p) => (p.$flat ? 12 : 13)}px;
  height: ${(p) => (p.$flat ? 12 : 13)}px;
  border: 1px solid ${(p) => (p.$flat ? "#555" : "#1c5180")};
  background: ${(p) => (p.$flat ? "#fff" : "linear-gradient(135deg, #dcdcd7, #fff)")};
  &:checked { background: ${(p) => tickMark(p.$flat ? "000" : "21a121")} center no-repeat #fff; }
  &:disabled { border-color: #999; background: ${tickMark("777")} center no-repeat #e4e4e8; }
`;

const Radio = styled.input.attrs({ type: "radio" })`
  appearance: none;
  flex: none;
  width: 13px;
  height: 13px;
  border: 1px solid #1c5180;
  border-radius: 50%;
  background: linear-gradient(135deg, #dcdcd7, #fff);
  &:checked { background: radial-gradient(circle, #21a121 0 2px, transparent 3px), #fff; }
`;

const Choice = styled.label<{ $top?: number; $indent?: number }>`
  display: flex;
  align-items: center;
  align-self: flex-start;
  gap: 3px;
  height: 13px;
  margin: ${(p) => p.$top ?? 0}px 0 0 ${(p) => p.$indent ?? 0}px;
  white-space: nowrap;
`;

const Group = styled.fieldset<{ $top: number }>`
  min-width: 0;
  margin: ${(p) => p.$top}px 0 0;
  padding: 0;
  border: 1px solid #bdb9c0;
  border-radius: 4px;
  legend { height: 13px; padding: 0 4px 0 3px; margin-left: 5px; color: #0046d5; }
  legend label { color: #000; }
`;

const GroupBody = styled.div<{ $pad: string }>`
  padding: ${(p) => p.$pad};
`;

const FieldRow = styled.div`
  display: flex;
  align-items: center;
  justify-content: space-between;
  height: 20px;
  margin-bottom: 6px;
  color: #a4a2a8;
`;

const IpBox = styled.div`
  display: flex;
  width: 125px;
  height: 20px;
  padding: 2px 3px;
  border: 1px solid ${c.field};
  box-shadow: inset 0 0 0 1px #fff;
  background: ${c.face};
`;

const Octet = styled.input`
  flex: 1;
  min-width: 0;
  border: 0;
  background: none;
`;

const IpField = ({ label }: { label: string }) => {
  const id = useId();
  return (
    <FieldRow>
      <label htmlFor={id}>{label}</label>
      <IpBox>
        <Octet id={id} disabled />.<Octet disabled aria-label={`${label} part 2`} />.
        <Octet disabled aria-label={`${label} part 3`} />.<Octet disabled aria-label={`${label} part 4`} />
      </IpBox>
    </FieldRow>
  );
};

const ConnectionDialog = () => (
  <Frame $edge={1}>
    <TitleBar $edge={1}>
      <ConnectionIcon />
      <Title>Local Area Connection Properties</Title>
      <CaptionButton aria-label="Help"><HelpMark /></CaptionButton>
      <CaptionButton $close aria-label="Close"><CloseMark /></CaptionButton>
    </TitleBar>
    <Client $face>
      <Dialog>
        <Tabs role="tablist">
          <Tab role="tab" aria-selected $on>General</Tab>
          <Tab role="tab">Advanced</Tab>
        </Tabs>
        <Sheet $height={353}>
          <Text>Connect using:</Text>
          <Line $top={5} $gap={6}>
            <Adapter><CardIcon />Intel(R) 82567LM-3 Gigabit Network</Adapter>
            <Push $w={89} $tone="default">Configure...</Push>
          </Line>
          <Text $top={12}>This connection uses the following items:</Text>
          <ItemBox>
            <div>
              <ItemRow><Check $flat defaultChecked /><ServiceIcon />File and Printer Sharing for Microsoft Networks</ItemRow>
              <ItemRow><Check $flat defaultChecked /><ServiceIcon />QoS Packet Scheduler</ItemRow>
              <ItemRow><Check $flat defaultChecked disabled /><ProtocolIcon /><Selected $pad={4}>Internet Protocol (TCP/IP)</Selected></ItemRow>
            </div>
            <HScroll>
              <BarButton aria-label="Scroll left"><Chevron turn={90} /></BarButton>
              <Thumb $length={251}><Grip /></Thumb>
            </HScroll>
          </ItemBox>
          <Line $top={7} $gap={11}>
            <Push $w={99}>Install...</Push>
            <Push $w={99} disabled>Uninstall</Push>
            <Push $w={99} $tone="hot">Properties</Push>
          </Line>
          <Group $top={7}>
            <legend>Description</legend>
            <GroupBody $pad="4px 10px 10px 13px">
              Transmission Control Protocol/Internet Protocol. The default wide area network protocol that provides
              communication across diverse interconnected networks.
            </GroupBody>
          </Group>
          <Choice $top={9}><Check />Show icon in notification area when connected</Choice>
          <Choice $top={4}><Check defaultChecked />Notify me when this connection has limited or no connectivity</Choice>
        </Sheet>
        <Footer>
          <Push $w={73}>OK</Push>
          <Push $w={73}>Cancel</Push>
        </Footer>
      </Dialog>
    </Client>
  </Frame>
);

const ProtocolDialog = () => (
  <Frame $edge={1}>
    <TitleBar $edge={1}>
      <Title>Internet Protocol (TCP/IP) Properties</Title>
      <CaptionButton aria-label="Help"><HelpMark /></CaptionButton>
      <CaptionButton $close aria-label="Close"><CloseMark /></CaptionButton>
    </TitleBar>
    <Client $face>
      <Dialog>
        <Tabs role="tablist">
          <Tab role="tab" aria-selected $on>General</Tab>
          <Tab role="tab">Alternate Configuration</Tab>
        </Tabs>
        <Sheet $height={357}>
          <Text>
            You can get IP settings assigned automatically if your network supports this capability. Otherwise, you
            need to ask your network administrator for the appropriate IP settings.
          </Text>
          <Choice $top={22} $indent={9}><Radio name="ip" defaultChecked />Obtain an IP address automatically</Choice>
          <Group $top={8}>
            <legend><Choice><Radio name="ip" />Use the following IP address:</Choice></legend>
            <GroupBody $pad="7px 44px 2px 12px">
              <IpField label="IP address:" />
              <IpField label="Subnet mask:" />
              <IpField label="Default gateway:" />
            </GroupBody>
          </Group>
          <Choice $top={12} $indent={9}><Radio name="dns" defaultChecked />Obtain DNS server address automatically</Choice>
          <Group $top={9}>
            <legend><Choice><Radio name="dns" />Use the following DNS server addresses:</Choice></legend>
            <GroupBody $pad="7px 44px 2px 12px">
              <IpField label="Preferred DNS server:" />
              <IpField label="Alternate DNS server:" />
            </GroupBody>
          </Group>
          <Footer $top={17}>
            <Push $w={88}>Advanced...</Push>
          </Footer>
        </Sheet>
        <Footer>
          <Push $w={73} $tone="default">OK</Push>
          <Push $w={73}>Cancel</Push>
        </Footer>
      </Dialog>
    </Client>
  </Frame>
);

export default function App() {
  return (
    <>
      <GlobalStyle />
      <Desktop>
        <Panel $from={1} $to={4} $top={0}>
          <ExplorerWindow />
          <Caption $indent={11}>a.</Caption>
        </Panel>
        <Panel $from={2} $to={6} $top={185}>
          <ConnectionDialog />
          <Pointer $left={295} $top={251} />
          <Caption $indent={5}>b.</Caption>
        </Panel>
        <SidePanel $from={3} $to={7} $top={236}>
          <Caption>c.</Caption>
          <ProtocolDialog />
        </SidePanel>
      </Desktop>
    </>
  );
}
